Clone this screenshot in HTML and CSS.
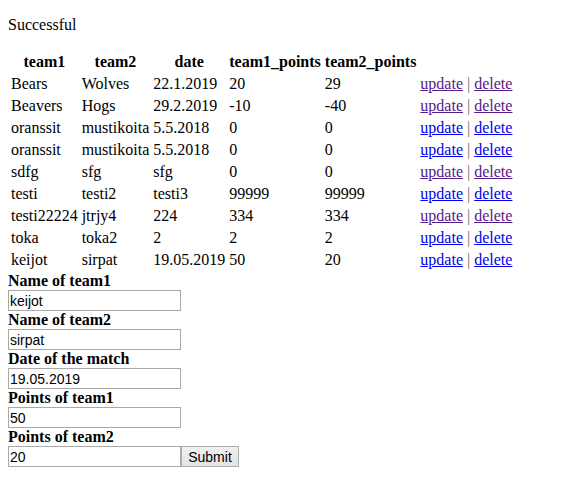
FILE: index.html
```html
<!DOCTYPE html>
<html>
<head>
<meta charset="utf-8">
<title>Matches</title>
<link rel="stylesheet" href="styles.css">
</head>
<body>
<p class="status">Successful</p>
<table class="matches">
  <thead>
    <tr><th>team1</th><th>team2</th><th>date</th><th>team1_points</th><th>team2_points</th><th></th></tr>
  </thead>
  <tbody>
    <tr><td>Bears</td><td>Wolves</td><td>22.1.2019</td><td>20</td><td>29</td><td><a class="visited" href="#">update</a> <span class="sep">|</span> <a class="visited" href="#">delete</a></td></tr>
    <tr><td>Beavers</td><td>Hogs</td><td>29.2.2019</td><td>-10</td><td>-40</td><td><a class="visited" href="#">update</a> <span class="sep">|</span> <a class="visited" href="#">delete</a></td></tr>
    <tr><td>oranssit</td><td>mustikoita</td><td>5.5.2018</td><td>0</td><td>0</td><td><a class="link" href="#">update</a> <span class="sep">|</span> <a class="link" href="#">delete</a></td></tr>
    <tr><td>oranssit</td><td>mustikoita</td><td>5.5.2018</td><td>0</td><td>0</td><td><a class="link" href="#">update</a> <span class="sep">|</span> <a class="link" href="#">delete</a></td></tr>
    <tr><td>sdfg</td><td>sfg</td><td>sfg</td><td>0</td><td>0</td><td><a class="visited" href="#">update</a> <span class="sep">|</span> <a class="visited" href="#">delete</a></td></tr>
    <tr><td>testi</td><td>testi2</td><td>testi3</td><td>99999</td><td>99999</td><td><a class="link" href="#">update</a> <span class="sep">|</span> <a class="link" href="#">delete</a></td></tr>
    <tr><td>testi22224</td><td>jtrjy4</td><td>224</td><td>334</td><td>334</td><td><a class="visited" href="#">update</a> <span class="sep">|</span> <a class="visited" href="#">delete</a></td></tr>
    <tr><td>toka</td><td>toka2</td><td>2</td><td>2</td><td>2</td><td><a class="link" href="#">update</a> <span class="sep">|</span> <a class="link" href="#">delete</a></td></tr>
    <tr><td>keijot</td><td>sirpat</td><td>19.05.2019</td><td>50</td><td>20</td><td><a class="link" href="#">update</a> <span class="sep">|</span> <a class="link" href="#">delete</a></td></tr>
  </tbody>
</table>
<form class="match-form">
  <label class="field-label" for="t1">Name of team1</label>
  <input class="field" id="t1" type="text" value="keijot">
  <label class="field-label" for="t2">Name of team2</label>
  <input class="field" id="t2" type="text" value="sirpat">
  <label class="field-label" for="d">Date of the match</label>
  <input class="field" id="d" type="text" value="19.05.2019">
  <label class="field-label" for="p1">Points of team1</label>
  <input class="field" id="p1" type="text" value="50">
  <label class="field-label" for="p2">Points of team2</label>
  <div class="last-row">
    <input class="field" id="p2" type="text" value="20">
    <button class="submit" type="button">Submit</button>
  </div>
</form>
</body>
</html>
```

FILE: styles.css
```css
html, body {
  background: #ffffff;
}
body {
  margin: 0;
  padding: 8px;
  font-family: "Liberation Serif", "Times New Roman", serif;
  font-size: 16px;
  line-height: 18px;
  color: #000000;
}
.status {
  margin: 8px 0 16px 0;
}
.matches {
  border-collapse: separate;
  border-spacing: 2px;
  margin: 0;
}
.matches th,
.matches td {
  padding: 1px;
  line-height: 18px;
  text-align: left;
  white-space: nowrap;
}
.matches th {
  font-weight: bold;
  text-align: center;
}
.link {
  color: #0000ee;
  text-decoration: underline;
}
.visited {
  color: #551a8b;
  text-decoration: underline;
}
.sep {
  color: #6d6d6d;
}
.match-form {
  display: flex;
  flex-direction: column;
  align-items: flex-start;
  margin: 0;
}
.field-label {
  font-weight: bold;
  line-height: 18px;
  height: 18px;
}
.field {
  box-sizing: border-box;
  width: 173px;
  height: 21px;
  margin: 0;
  padding: 1px 2px 1px 1px;
  border: 1px solid #a9a9a9;
  font-family: "Liberation Sans", Arial, sans-serif;
  font-size: 14px;
  color: #000000;
  background: #ffffff;
  outline: none;
}
.last-row {
  display: flex;
  align-items: stretch;
}
.submit {
  box-sizing: border-box;
  width: 58px;
  height: 21px;
  margin: 0;
  padding: 0 6px;
  border: 1px solid #adadad;
  background: linear-gradient(#f0f0f0, #e3e3e3);
  font-family: "Liberation Sans", Arial, sans-serif;
  font-size: 14px;
  color: #000000;
}
```
